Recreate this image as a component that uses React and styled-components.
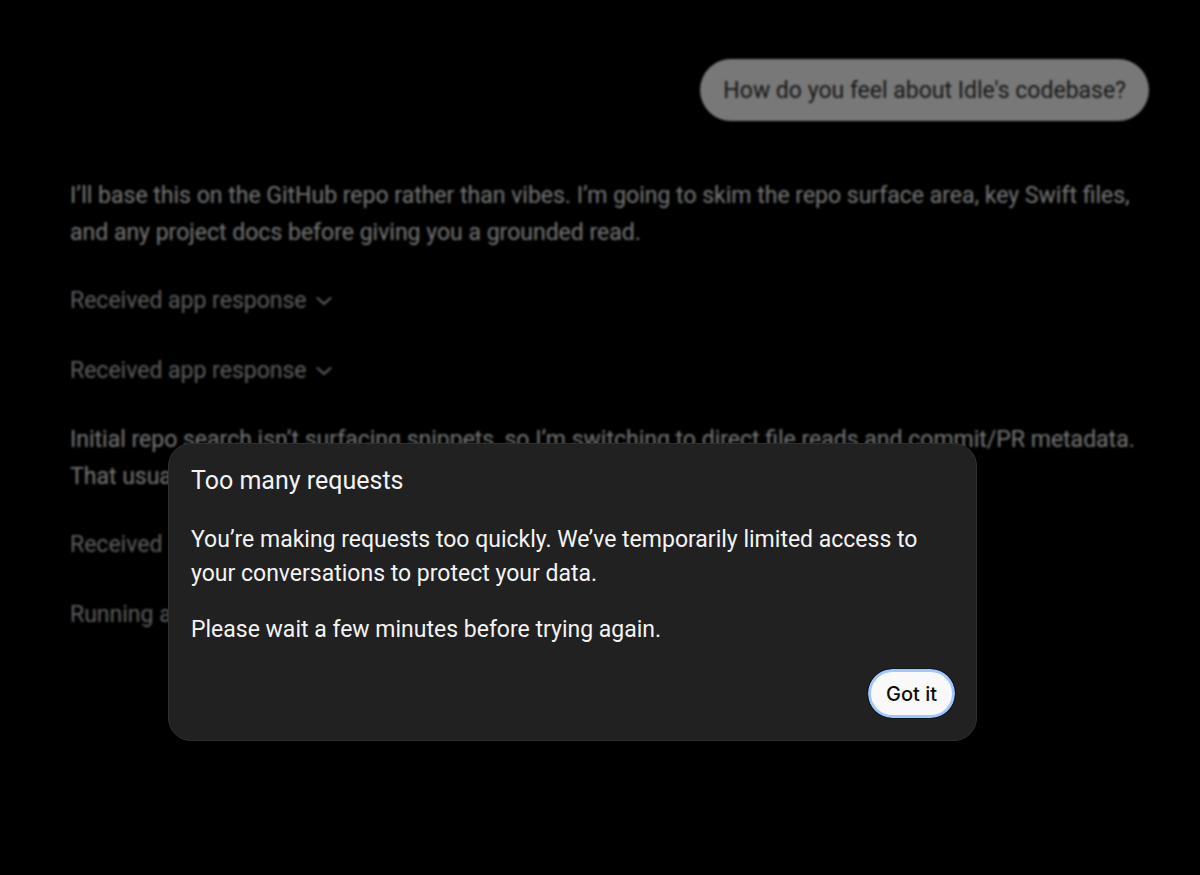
import styled, { createGlobalStyle } from "styled-components";

const GlobalStyle = createGlobalStyle`
    body {
        margin: 0;
        background: #000000;
        font-family: Roboto, "Liberation Sans", sans-serif;
    }

    * {
        box-sizing: border-box;
    }
`;

const Conversation = styled.main`
    display: flex;
    flex-direction: column;
    gap: 56px;
    min-height: 100vh;
    padding: 59px 51px 59px 70px;
    color: #e4e4e4;
    font-size: 23px;
`;

const UserMessage = styled.div`
    align-self: flex-end;
    padding: 14px 23px 12px;
    border-radius: 31px;
    background: #f0f0f0;
    color: #303030;
    line-height: 36px;
`;

const Answer = styled.article`
    display: flex;
    flex-direction: column;
    gap: 32px;
`;

const Paragraph = styled.p`
    margin: 0;
    line-height: 37px;
`;

const Steps = styled.div`
    display: flex;
    flex-direction: column;
    align-items: flex-start;
    gap: 34px;
`;

const StepButton = styled.button`
    display: flex;
    align-items: center;
    gap: 8px;
    padding: 0;
    border: none;
    background: none;
    color: #b8b8b8;
    font: inherit;
    line-height: 36px;
    cursor: pointer;
`;

const Overlay = styled.div`
    position: fixed;
    inset: 0;
    display: flex;
    justify-content: center;
    align-items: flex-start;
    padding: 443px 55px 0 0;
    background: rgba(0, 0, 0, 0.5);
    backdrop-filter: blur(1px);
`;

const Dialog = styled.div`
    width: 100%;
    max-width: 809px;
    padding: 20px 21px 22px 22px;
    border: 1px solid #303030;
    border-radius: 23px;
    background: #212121;
    color: #f3f3f3;
    font-size: 23px;
    line-height: 34px;
`;

const DialogTitle = styled.h2`
    margin: 0 0 25px;
    font-size: 25px;
    font-weight: 400;
    line-height: 34px;
`;

const DialogText = styled.p`
    margin: 0 0 22px;
`;

const DialogActions = styled.div`
    display: flex;
    justify-content: flex-end;
`;

const ConfirmButton = styled.button`
    height: 49px;
    padding: 0 15px;
    border: 3px solid #9ec9fa;
    border-radius: 25px;
    outline: 1px solid #10161f;
    background: #f9f9f9;
    color: #0d0d0d;
    font-family: Inter, "Liberation Sans", sans-serif;
    font-size: 20px;
    font-weight: 500;
    cursor: pointer;
`;

function Step({ label }) {
    return (
        <StepButton type="button">
            {label}
            <svg
                width="18"
                height="18"
                viewBox="0 0 18 18"
                fill="none"
                stroke="currentColor"
                strokeWidth="2"
                strokeLinecap="round"
                strokeLinejoin="round"
                aria-hidden="true"
            >
                <path d="M2.5 6l6.5 6 6.5-6" />
            </svg>
        </StepButton>
    );
}

function App() {
    return (
        <>
            <GlobalStyle />
            <Conversation>
                <UserMessage>How do you feel about Idle's codebase?</UserMessage>
                <Answer>
                    <Paragraph>
                        I’ll base this on the GitHub repo rather than vibes. I’m
                        going to skim the repo surface area, key Swift files, and
                        any project docs before giving you a grounded read.
                    </Paragraph>
                    <Steps>
                        <Step label="Received app response" />
                        <Step label="Received app response" />
                    </Steps>
                    <Paragraph>
                        Initial repo search isn’t surfacing snippets, so I’m
                        switching to direct file reads and commit/PR metadata.
                        That usually
                    </Paragraph>
                    <Steps>
                        <Step label="Received app response" />
                        <Step label="Running app request" />
                    </Steps>
                </Answer>
            </Conversation>
            <Overlay>
                <Dialog
                    role="alertdialog"
                    aria-modal="true"
                    aria-labelledby="dialog-title"
                >
                    <DialogTitle id="dialog-title">Too many requests</DialogTitle>
                    <DialogText>
                        You’re making requests too quickly. We’ve temporarily
                        limited access to your conversations to protect your data.
                    </DialogText>
                    <DialogText>
                        Please wait a few minutes before trying again.
                    </DialogText>
                    <DialogActions>
                        <ConfirmButton type="button">Got it</ConfirmButton>
                    </DialogActions>
                </Dialog>
            </Overlay>
        </>
    );
}

export default App;
